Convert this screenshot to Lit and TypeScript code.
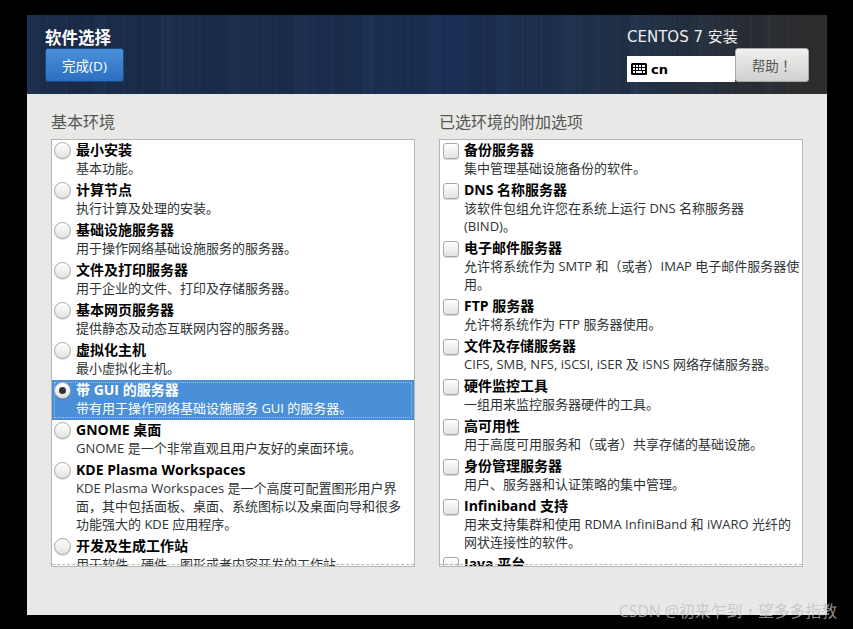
import { LitElement, html, css, svg } from "lit";
import { customElement } from "lit/decorators.js";

type Item = { t: string; d: string[]; sel?: boolean };

const ENV: Item[] = [
  { t: "最小安装", d: ["基本功能。"] },
  { t: "计算节点", d: ["执行计算及处理的安装。"] },
  { t: "基础设施服务器", d: ["用于操作网络基础设施服务的服务器。"] },
  { t: "文件及打印服务器", d: ["用于企业的文件、打印及存储服务器。"] },
  { t: "基本网页服务器", d: ["提供静态及动态互联网内容的服务器。"] },
  { t: "虚拟化主机", d: ["最小虚拟化主机。"] },
  { t: "带 GUI 的服务器", d: ["带有用于操作网络基础设施服务 GUI 的服务器。"], sel: true },
  { t: "GNOME 桌面", d: ["GNOME 是一个非常直观且用户友好的桌面环境。"] },
  {
    t: "KDE Plasma Workspaces",
    d: [
      "KDE Plasma Workspaces 是一个高度可配置图形用户界",
      "面，其中包括面板、桌面、系统图标以及桌面向导和很多",
      "功能强大的 KDE 应用程序。",
    ],
  },
  { t: "开发及生成工作站", d: ["用于软件、硬件、图形或者内容开发的工作站。"] },
];

const ADDONS: Item[] = [
  { t: "备份服务器", d: ["集中管理基础设施备份的软件。"] },
  { t: "DNS 名称服务器", d: ["该软件包组允许您在系统上运行 DNS 名称服务器", "(BIND)。"] },
  { t: "电子邮件服务器", d: ["允许将系统作为 SMTP 和（或者）IMAP 电子邮件服务器使", "用。"] },
  { t: "FTP 服务器", d: ["允许将系统作为 FTP 服务器使用。"] },
  { t: "文件及存储服务器", d: ["CIFS, SMB, NFS, iSCSI, iSER 及 iSNS 网络存储服务器。"] },
  { t: "硬件监控工具", d: ["一组用来监控服务器硬件的工具。"] },
  { t: "高可用性", d: ["用于高度可用服务和（或者）共享存储的基础设施。"] },
  { t: "身份管理服务器", d: ["用户、服务器和认证策略的集中管理。"] },
  { t: "Infiniband 支持", d: ["用来支持集群和使用 RDMA InfiniBand 和 iWARO 光纤的", "网状连接性的软件。"] },
  { t: "Java 平台", d: ["支持 Java 的平台。"] },
];

const KEYBOARD = svg`<svg class="kbd" viewBox="0 0 16 12" width="16" height="12">
  <rect x="0" y="0" width="16" height="12" rx="1.5" fill="#000"/>
  <g fill="#fff">
    <rect x="2" y="2" width="2" height="2"/><rect x="5" y="2" width="2" height="2"/><rect x="8" y="2" width="2" height="2"/><rect x="11" y="2" width="3" height="2"/>
    <rect x="2" y="5" width="2" height="2"/><rect x="5" y="5" width="2" height="2"/><rect x="8" y="5" width="2" height="2"/><rect x="11" y="5" width="3" height="2"/>
    <rect x="2" y="8" width="2" height="2"/><rect x="5" y="8" width="6" height="2"/><rect x="12" y="8" width="2" height="2"/>
  </g>
</svg>`;

@customElement("app-root")
export class AppRoot extends LitElement {
  static styles = css`
    :host {
      display: block;
      width: 853px;
      height: 629px;
      background: #000;
      position: relative;
      overflow: hidden;
      font-family: "Open Sans", "Noto Sans CJK SC", sans-serif;
      color: #2e3436;
    }
    .window {
      position: relative;
      top: 15px;
      margin-left: 27px;
      width: 800px;
      height: 600px;
      background: #e8e8e7;
      display: flex;
      flex-direction: column;
    }
    .header {
      height: 79px;
      flex: none;
      box-sizing: border-box;
      padding: 12px 18px 0;
      display: flex;
      justify-content: space-between;
      background:
        repeating-linear-gradient(90deg, rgba(255,255,255,0.012) 0 3px, rgba(0,0,0,0.02) 3px 7px, rgba(255,255,255,0) 7px 17px, rgba(0,0,0,0.025) 17px 19px),
        repeating-linear-gradient(90deg, rgba(90,130,190,0.03) 0 13px, rgba(0,0,0,0) 13px 41px, rgba(0,0,0,0.035) 41px 67px),
        linear-gradient(90deg, #1b2c49 0%, #1a2d4c 30%, #1a2f53 55%, #223146 78%, #2b2e32 93%, #2e2e2e 100%);
    }
    .h-left { display: flex; flex-direction: column; align-items: flex-start; }
    h1 {
      margin: 0;
      height: 21px;
      line-height: 21px;
      font-size: 16.5px;
      font-weight: 700;
      color: #fff;
    }
    .done {
      box-sizing: border-box;
      width: 79px;
      height: 34px;
      border: 1px solid #1c4a80;
      border-radius: 3px;
      background: linear-gradient(#4a90d9, #2c6fc0);
      color: #fff;
      font: inherit;
      font-size: 13.5px;
      padding: 0;
    }
    .h-right { display: flex; flex-direction: column; align-items: flex-start; width: 182px; }
    .product {
      height: 21px;
      line-height: 21px;
      font-family: "DejaVu Sans", "Noto Sans CJK SC", sans-serif;
      font-size: 15px;
      color: #eeeeec;
      white-space: nowrap;
    }
    .controls { display: flex; align-items: flex-end; height: 34px; }
    .layout {
      box-sizing: border-box;
      width: 108px;
      height: 26px;
      background: #fff;
      display: flex;
      align-items: center;
      gap: 4px;
      padding-left: 4px;
      color: #000;
      font-family: "DejaVu Sans", sans-serif;
      font-size: 13px;
      font-weight: 700;
    }
    .kbd { flex: none; }
    .help {
      box-sizing: border-box;
      width: 74px;
      height: 34px;
      border: 1px solid #a8a8a6;
      border-radius: 3px;
      background: linear-gradient(#f0f0ee, #cfcfcd);
      color: #555753;
      font-family: "Open Sans", "Noto Sans CJK TC", sans-serif;
      font-size: 13.5px;
      padding: 0;
    }
    .content {
      display: grid;
      grid-template-columns: 364px 364px;
      column-gap: 24px;
      padding: 18px 0 0 24px;
    }
    h2 {
      margin: 0 0 7px;
      height: 20px;
      line-height: 20px;
      font-size: 16px;
      font-weight: 400;
      color: #555753;
    }
    .list {
      position: relative;
      box-sizing: border-box;
      height: 428px;
      border: 1px solid #b6b6b3;
      background: #fff;
      overflow: hidden;
    }
    .list::after {
      content: "";
      position: absolute;
      left: 0;
      right: 0;
      bottom: 1px;
      border-bottom: 1px dashed #b6b6b3;
    }
    .row {
      position: relative;
      box-sizing: border-box;
      padding: 0 4px 3px 24px;
      font-size: 13px;
      line-height: 18px;
      white-space: nowrap;
    }
    .title { font-size: 14px; font-weight: 700; color: #000; height: 19px; line-height: 19px; }
    .desc { color: #2e3436; }
    .row.sel { background: #4a90d9; }
    .row.sel .title, .row.sel .desc { color: #fff; }
    .row.sel::after {
      content: "";
      position: absolute;
      inset: 2px;
      border: 1px dotted rgba(255,255,255,0.45);
    }
    .radio, .check {
      position: absolute;
      box-sizing: border-box;
      background: linear-gradient(#ffffff, #e2e2e0);
      border: 1px solid #a8a8a5;
      box-shadow: 0 1px 0 rgba(0,0,0,0.15);
    }
    .radio { width: 17px; height: 17px; border-radius: 50%; left: 2px; top: 2px; }
    .check { width: 16px; height: 16px; border-radius: 3px; left: 3px; top: 3px; }
    .radio.on::after {
      content: "";
      position: absolute;
      left: 4px;
      top: 4px;
      width: 7px;
      height: 7px;
      border-radius: 50%;
      background: #2e3436;
    }
    .mark {
      position: absolute;
      right: 16px;
      bottom: 7px;
      font-family: "Open Sans", "Noto Sans CJK TC", sans-serif;
      font-size: 15.8px;
      color: rgba(190, 190, 190, 0.75);
      white-space: nowrap;
    }
  `;

  private row(it: Item, kind: "radio" | "check") {
    return html`<div class="row ${it.sel ? "sel" : ""}">
      <span class="${kind} ${it.sel ? "on" : ""}"></span>
      <div class="title">${it.t}</div>
      ${it.d.map((l) => html`<div class="desc">${l}</div>`)}
    </div>`;
  }

  render() {
    return html`
      <div class="window">
        <div class="header">
          <div class="h-left">
            <h1>软件选择</h1>
            <button class="done">完成(D)</button>
          </div>
          <div class="h-right">
            <div class="product">CENTOS 7 安装</div>
            <div class="controls">
              <div class="layout">${KEYBOARD}<span>cn</span></div>
              <button class="help">帮助！</button>
            </div>
          </div>
        </div>
        <div class="content">
          <section>
            <h2>基本环境</h2>
            <div class="list">${ENV.map((i) => this.row(i, "radio"))}</div>
          </section>
          <section>
            <h2>已选环境的附加选项</h2>
            <div class="list">${ADDONS.map((i) => this.row(i, "check"))}</div>
          </section>
        </div>
      </div>
      <div class="mark">CSDN @初来乍到，望多多指教</div>
    `;
  }
}
